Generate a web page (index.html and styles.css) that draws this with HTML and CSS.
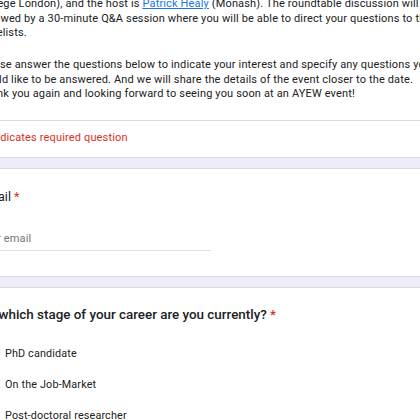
FILE: index.html
```html
<!DOCTYPE html>
<html lang="en">
<head>
    <meta charset="UTF-8">
    <meta name="viewport" content="width=device-width, initial-scale=1.0">
    <title>AYEW Roundtable</title>
    <link rel="stylesheet" href="styles.css">
</head>
<body>
    <div class="form">
        <div class="card header">
            <div class="description">
                <p>College London), and the host is <a href="#">Patrick Healy</a> (Monash). The roundtable discussion will be<br>
                followed by a 30-minute Q&amp;A session where you will be able to direct your questions to the<br>
                panelists.</p>
                <p>Please answer the questions below to indicate your interest and specify any questions you<br>
                would like to be answered. And we will share the details of the event closer to the date.<br>
                Thank you again and looking forward to seeing you soon at an AYEW event!</p>
            </div>
            <div class="required">* Indicates required question</div>
        </div>

        <div class="card">
            <div class="q-title">Email <span class="star">*</span></div>
            <div class="text-input">Your email</div>
        </div>

        <div class="card">
            <div class="q-title question">At which stage of your career are you currently? <span class="star">*</span></div>
            <div class="options">
                <label class="option"><span class="radio"></span>PhD candidate</label>
                <label class="option"><span class="radio"></span>On the Job-Market</label>
                <label class="option"><span class="radio"></span>Post-doctoral researcher</label>
            </div>
        </div>
    </div>
</body>
</html>
```

FILE: styles.css
```css
body { margin: 0; background-color: #f0ebf8; font-family: Roboto, "Liberation Sans", sans-serif; color: #202124; overflow: hidden; }
.form { margin: -3px 0 0 -41px; width: 700px; display: flex; flex-direction: column; gap: 10px; }
.card { background-color: #ffffff; border: 1px solid #dadce0; border-radius: 6px; padding: 0 18px 25px 18px; }

.header { border-top: none; border-radius: 0 0 6px 6px; padding-bottom: 12px; }
.description { font-size: 11px; line-height: 14.5px; letter-spacing: 0.15px; white-space: nowrap; padding-bottom: 18px; border-bottom: 1px solid #dadce0; margin: 0 -18px; padding-left: 18px; }
.description p { margin: 0; }
.description p + p { margin-top: 17.5px; }
.description a { color: #1a73e8; }
.required { color: #d93025; font-size: 11px; line-height: 14.5px; letter-spacing: 0.15px; padding-top: 10px; margin-left: 5px; }

.q-title { font-size: 12.5px; line-height: 16px; padding-top: 20px; white-space: nowrap; margin-left: 2px; }
.star { color: #d93025; }
.text-input { margin-top: 27px; width: 233px; color: #70757a; font-size: 11px; line-height: 14.5px; letter-spacing: 0.15px; padding-bottom: 3px; border-bottom: 1px solid #e0e0e0; }

.question { font-size: 13.4px; font-weight: 500; padding-top: 19px; margin-left: 4px; }
.options { margin-top: 15px; display: flex; flex-direction: column; }
.option { display: flex; align-items: center; height: 31px; font-size: 10.8px; letter-spacing: 0.15px; }
.radio { width: 13px; height: 13px; border: 2px solid #5f6368; border-radius: 50%; margin-right: 14px; box-sizing: border-box; flex: none; }
```
